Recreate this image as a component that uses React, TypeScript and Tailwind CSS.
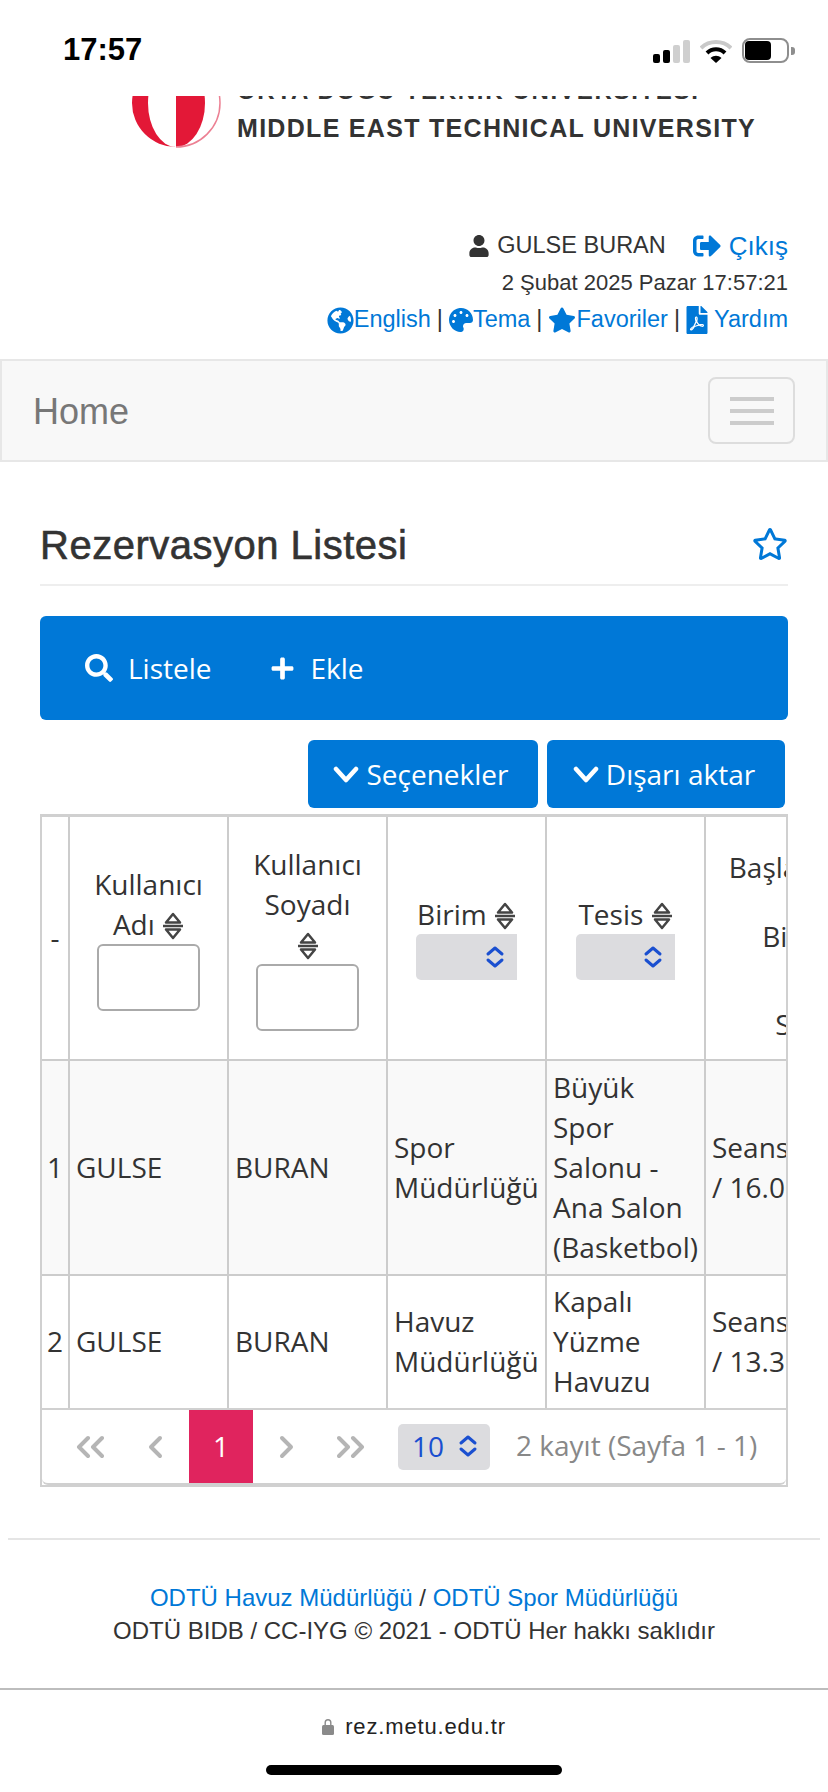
import React from 'react';
import {
  FaUser,
  FaSignOutAlt,
  FaGlobeAmericas,
  FaPalette,
  FaStar,
  FaRegStar,
  FaFilePdf,
  FaSearch,
  FaPlus,
} from 'react-icons/fa';

const SortIcon = () => (
  <svg width="22" height="28" viewBox="0 0 22 28" className="inline-block align-[-5px]" fill="none" stroke="#444" strokeWidth="2.500">
    <path d="M4 10.500 L11 2 L18 10.500 Z" strokeLinejoin="round" />
    <path d="M1 14 H21" />
    <path d="M4 17.500 L11 26 L18 17.500 Z" strokeLinejoin="round" />
  </svg>
);

const UpDown = ({ className = '' }: { className?: string }) => (
  <svg width="20" height="22" viewBox="0 0 20 22" className={className} fill="none" stroke="#1a4fd0" strokeWidth="3" strokeLinecap="round" strokeLinejoin="round">
    <path d="M3 8 L10 2 L17 8" />
    <path d="M3 14 L10 20 L17 14" />
  </svg>
);

const Chevrons = ({ d, w = 28 }: { d: string; w?: number }) => (
  <svg width={w} height="24" viewBox={`0 0 ${w} 24`} fill="none" stroke="#b5b5b5" strokeWidth="4" strokeLinecap="round" strokeLinejoin="round">
    <path d={d} />
  </svg>
);

const CaretDown = () => (
  <svg width="26" height="17" viewBox="0 0 26 17" fill="none" stroke="#fff" strokeWidth="4.500" strokeLinecap="round" strokeLinejoin="round">
    <path d="M3 3 L13 14 L23 3" />
  </svg>
);

const StatusBar = () => (
  <div className="h-[96px] flex items-start pt-[33px] pl-[63px] shrink-0">
    <span className="text-[31px] leading-[34px] font-bold text-black">17:57</span>
    <div className="ml-auto mr-[33px] mt-[5px] flex items-end gap-[10px]">
      <div className="flex items-end gap-[3px] h-[23px]">
        <div className="w-[7px] h-[9px] rounded-[2px] bg-black" />
        <div className="w-[7px] h-[13px] rounded-[2px] bg-black" />
        <div className="w-[7px] h-[18px] rounded-[2px] bg-[#cfcfcf]" />
        <div className="w-[7px] h-[23px] rounded-[2px] bg-[#cfcfcf]" />
      </div>
      <svg width="32" height="23" viewBox="0 0 32 23" className="mb-0">
        <path d="M1 8 C9 0 23 0 31 8" fill="none" stroke="#c9c9c9" strokeWidth="4" />
        <path d="M7 13 C12 8 20 8 25 13" fill="none" stroke="#000" strokeWidth="4" />
        <path d="M10.5 18 L16 23 L21.500 18 C18 15 14 15 10.5 18 Z" fill="#000" />
      </svg>
      <div className="flex items-center gap-[2px]">
        <div className="w-[47px] h-[25px] rounded-[8px] border-2 border-[#8e8e8e] p-[1px]">
          <div className="w-[26px] h-full rounded-[4px] bg-black" />
        </div>
        <div className="w-[4px] h-[8px] rounded-r-[3px] bg-[#8e8e8e]" />
      </div>
    </div>
  </div>
);

const Logo = () => (
  <div className="h-[55px] overflow-hidden flex items-start pl-[131px] shrink-0">
    <svg width="90" height="52" viewBox="0 0 90 52">
      <path d="M45 51 A44 44 0 0 1 45 -37 A28 44 0 0 0 45 51 Z" fill="#e31837" />
      <path d="M45 -37 A29 44 0 0 1 45 51 Z" fill="#e31837" />
      <path d="M45 51 A44 44 0 0 0 45 -37" fill="none" stroke="#ec8093" strokeWidth="1.5" />
    </svg>
    <div className="ml-[16px] -mt-[17px] text-[#333] font-bold whitespace-nowrap">
      <div className="text-[24px] leading-[24px] tracking-[1.7px]">ORTA DOĞU TEKNİK ÜNİVERSİTESİ</div>
      <div className="mt-[12px] text-[25px] leading-[26px] tracking-[1.3px]">MIDDLE EAST TECHNICAL UNIVERSITY</div>
    </div>
  </div>
);

const UserBlock = () => (
  <div className="mt-[81px] pr-[40px] flex flex-col items-end text-[#333] shrink-0">
    <div className="flex items-center h-[28px] text-[23.5px]">
      <FaUser size={22} className="mr-[7px]" />
      <span>GULSE BURAN</span>
      <a className="flex items-center ml-[27px] text-[#0078d7]">
        <FaSignOutAlt size={28} className="mr-[8px]" />
        <span className="text-[26px]">Çıkış</span>
      </a>
    </div>
    <div className="mt-[9px] h-[28px] leading-[28px] text-[22px]">2 Şubat 2025 Pazar 17:57:21</div>
    <div className="mt-[9px] flex items-center h-[28px] text-[23.5px] text-[#0078d7]">
      <FaGlobeAmericas size={27} />
      <span>English</span>
      <span className="mx-[6px] text-[#333]">|</span>
      <FaPalette size={24} />
      <span>Tema</span>
      <span className="mx-[6px] text-[#333]">|</span>
      <FaStar size={28} />
      <span>Favoriler</span>
      <span className="ml-[6px] mr-[3px] text-[#333]">|</span>
      <FaFilePdf size={28} />
      <span className="ml-[3px]">Yardım</span>
    </div>
  </div>
);

const Navbar = () => (
  <div className="mt-[25px] h-[103px] border-2 border-[#e7e7e7] bg-[#f8f8f8] flex items-center justify-between pl-[31px] pr-[31px] shrink-0">
    <span className="text-[36px] text-[#777] mt-[2px]">Home</span>
    <div className="w-[87px] h-[67px] rounded-[8px] border-2 border-[#ddd] flex flex-col items-center justify-center gap-[8px]">
      <div className="w-[44px] h-[4px] bg-[#ccc]" />
      <div className="w-[44px] h-[4px] bg-[#ccc]" />
      <div className="w-[44px] h-[4px] bg-[#ccc]" />
    </div>
  </div>
);

const Heading = () => (
  <div className="mt-[60px] mx-[40px] h-[64px] border-b-2 border-[#eee] flex items-start justify-between shrink-0">
    <h1 className="text-[40px] leading-[46px] tracking-[0.5px] text-[#333] [-webkit-text-stroke:0.6px_#333]">Rezervasyon Listesi</h1>
    <FaRegStar size={36} className="text-[#0078d7] mt-[4px]" />
  </div>
);

const Toolbar = () => (
  <div className="font-['Open_Sans',sans-serif] shrink-0">
    <div className="mt-[30px] mx-[40px] h-[104px] rounded-[6px] bg-[#0078d7] flex items-center pl-[45px] text-white text-[28px]">
      <FaSearch size={28} />
      <span className="ml-[15px]">Listele</span>
      <FaPlus size={25} className="ml-[58px]" />
      <span className="ml-[16px]">Ekle</span>
    </div>
    <div className="mt-[20px] mr-[43px] flex justify-end gap-[9px] text-white text-[28px]">
      <div className="w-[230px] h-[68px] rounded-[6px] bg-[#0078d7] flex items-center justify-center gap-[7px] pr-[4px]">
        <CaretDown />
        <span>Seçenekler</span>
      </div>
      <div className="w-[238px] h-[68px] rounded-[6px] bg-[#0078d7] flex items-center justify-center gap-[7px] pr-[4px]">
        <CaretDown />
        <span>Dışarı aktar</span>
      </div>
    </div>
  </div>
);

const rows = [
  { n: 1, ad: 'GULSE', soyad: 'BURAN', birim: ['Spor', 'Müdürlüğü'], tesis: ['Büyük', 'Spor', 'Salonu -', 'Ana Salon', '(Basketbol)'], seans: ['Seans 1', '/ 16.00'], bg: 'bg-[#f9f9f9]', h: 'h-[215px]' },
  { n: 2, ad: 'GULSE', soyad: 'BURAN', birim: ['Havuz', 'Müdürlüğü'], tesis: ['Kapalı', 'Yüzme', 'Havuzu'], seans: ['Seans 2', '/ 13.30'], bg: 'bg-white', h: 'h-[132px]' },
];

const thClass = 'border-r-2 border-b-2 border-[#ccc] font-normal text-center align-middle p-0 pb-[2px]';
const tdClass = 'border-r-2 border-[#ccc] align-middle pl-[6px] pr-[6px] pb-[2px] whitespace-nowrap';

const FilterSelect = ({ w }: { w: string }) => (
  <div className={`mx-auto h-[46px] ${w} rounded-l-[5px] bg-[#dcdcdf] flex items-center justify-end pr-[12px]`}>
    <UpDown />
  </div>
);

const DataTable = () => (
  <div className="mt-[6px] mx-[40px] h-[673px] border-x-2 border-t-[3px] border-b-2 border-[#d0d0d0] overflow-hidden font-['Open_Sans',sans-serif] text-[28px] leading-[40px] text-[#333] shrink-0">
    <div className="h-[591px] overflow-hidden">
      <table className="table-fixed border-separate border-spacing-0 w-[892px]">
        <colgroup>
          <col className="w-[28px]" />
          <col className="w-[159px]" />
          <col className="w-[159px]" />
          <col className="w-[159px]" />
          <col className="w-[159px]" />
          <col className="w-[228px]" />
        </colgroup>
        <thead>
          <tr className="h-[244px]">
            <th className={thClass}>-</th>
            <th className={thClass}>
              Kullanıcı
              <br />
              Adı <SortIcon />
              <div className="mx-auto w-[103px] h-[67px] rounded-[6px] border-2 border-[#aaa] bg-white" />
            </th>
            <th className={thClass}>
              Kullanıcı
              <br />
              Soyadı
              <br />
              <SortIcon />
              <div className="mx-auto w-[103px] h-[67px] rounded-[6px] border-2 border-[#aaa] bg-white" />
            </th>
            <th className={thClass}>
              Birim <SortIcon />
              <FilterSelect w="w-[101px]" />
            </th>
            <th className={thClass}>
              Tesis <SortIcon />
              <FilterSelect w="w-[99px]" />
            </th>
            <th className="border-b-2 border-[#ccc] font-normal align-middle p-0">
              <div className="w-[168px] text-center pt-[14px]">
                <div>Başlangıç</div>
                <div className="mt-[29px]">Bitiş</div>
                <div className="mt-[48px]">Sil</div>
              </div>
            </th>
          </tr>
        </thead>
        <tbody>
          {rows.map((r, i) => (
            <tr key={r.n} className={`${r.bg} ${r.h}`}>
              <td className={`border-r-2 border-[#ccc] align-middle text-center pb-[2px] ${i === 0 ? 'border-b-2' : ''}`}>{r.n}</td>
              <td className={`${tdClass} ${i === 0 ? 'border-b-2' : ''}`}>{r.ad}</td>
              <td className={`${tdClass} ${i === 0 ? 'border-b-2' : ''}`}>{r.soyad}</td>
              <td className={`${tdClass} ${i === 0 ? 'border-b-2' : ''}`}>
                {r.birim.map((t) => <div key={t}>{t}</div>)}
              </td>
              <td className={`${tdClass} ${i === 0 ? 'border-b-2' : ''}`}>
                {r.tesis.map((t) => <div key={t}>{t}</div>)}
              </td>
              <td className={`align-middle pl-[6px] pb-[2px] whitespace-nowrap border-[#ccc] ${i === 0 ? 'border-b-2' : ''}`}>
                {r.seans.map((t) => <div key={t}>{t}</div>)}
              </td>
            </tr>
          ))}
        </tbody>
      </table>
    </div>
    <div className="h-[77px] border-t-2 border-b-2 border-[#d0d0d0] rounded-b-[6px] bg-white flex items-center">
      <div className="w-[64px] ml-[16px] flex justify-center"><Chevrons d="M12 3 L3 12 L12 21 M26 3 L17 12 L26 21" /></div>
      <div className="w-[64px] ml-[1px] flex justify-center"><Chevrons w={16} d="M13 3 L4 12 L13 21" /></div>
      <div className="w-[64px] h-full ml-[2px] pb-[2px] bg-[#e0245e] text-white flex items-center justify-center">1</div>
      <div className="w-[64px] ml-[2px] flex justify-center"><Chevrons w={16} d="M3 3 L12 12 L3 21" /></div>
      <div className="w-[64px] flex justify-center"><Chevrons d="M2 3 L11 12 L2 21 M16 3 L25 12 L16 21" /></div>
      <div className="ml-[15px] w-[92px] h-[46px] rounded-[5px] bg-[#dcdcdf] flex items-center justify-between pl-[14px] pr-[12px] pb-[2px] text-[#1a4fd0]">
        <span>10</span>
        <UpDown />
      </div>
      <span className="ml-[26px] pb-[4px] text-[#888]">2 kayıt (Sayfa 1 - 1)</span>
    </div>
  </div>
);

const Footer = () => (
  <div className="shrink-0">
    <div className="mt-[51px] mx-[8px] h-[2px] bg-[#e5e5e5]" />
    <div className="mt-[41px] text-center text-[24px] leading-[33px] text-[#333]">
      <div>
        <a className="text-[#0078d7]">ODTÜ Havuz Müdürlüğü</a> / <a className="text-[#0078d7]">ODTÜ Spor Müdürlüğü</a>
      </div>
      <div>ODTÜ BIDB / CC-IYG © 2021 - ODTÜ Her hakkı saklıdır</div>
    </div>
  </div>
);

const BrowserBar = () => (
  <div className="mt-[41px] flex-1 border-t-2 border-[#bdbdbd] flex flex-col items-center">
    <div className="mt-[22px] flex items-center gap-[11px] h-[28px] text-[22px] text-[#222] tracking-[0.85px]">
      <svg width="12" height="17" viewBox="0 0 12 17" fill="#8a8a8a">
        <path d="M2.500 7 V4.500 a3.500 3.500 0 0 1 7 0 V7 h-1.400 V4.500 a2.100 2.100 0 0 0 -4.200 0 V7 Z" />
        <rect x="0" y="7" width="12" height="10" rx="1.500" />
      </svg>
      <span>rez.metu.edu.tr</span>
    </div>
    <div className="mt-[25px] w-[296px] h-[10px] rounded-full bg-black" />
  </div>
);

export default function App() {
  return (
    <div className="w-[828px] h-[1792px] bg-white overflow-hidden flex flex-col font-['Liberation_Sans',Arial,sans-serif]">
      <StatusBar />
      <Logo />
      <UserBlock />
      <Navbar />
      <Heading />
      <Toolbar />
      <DataTable />
      <Footer />
      <BrowserBar />
    </div>
  );
}
